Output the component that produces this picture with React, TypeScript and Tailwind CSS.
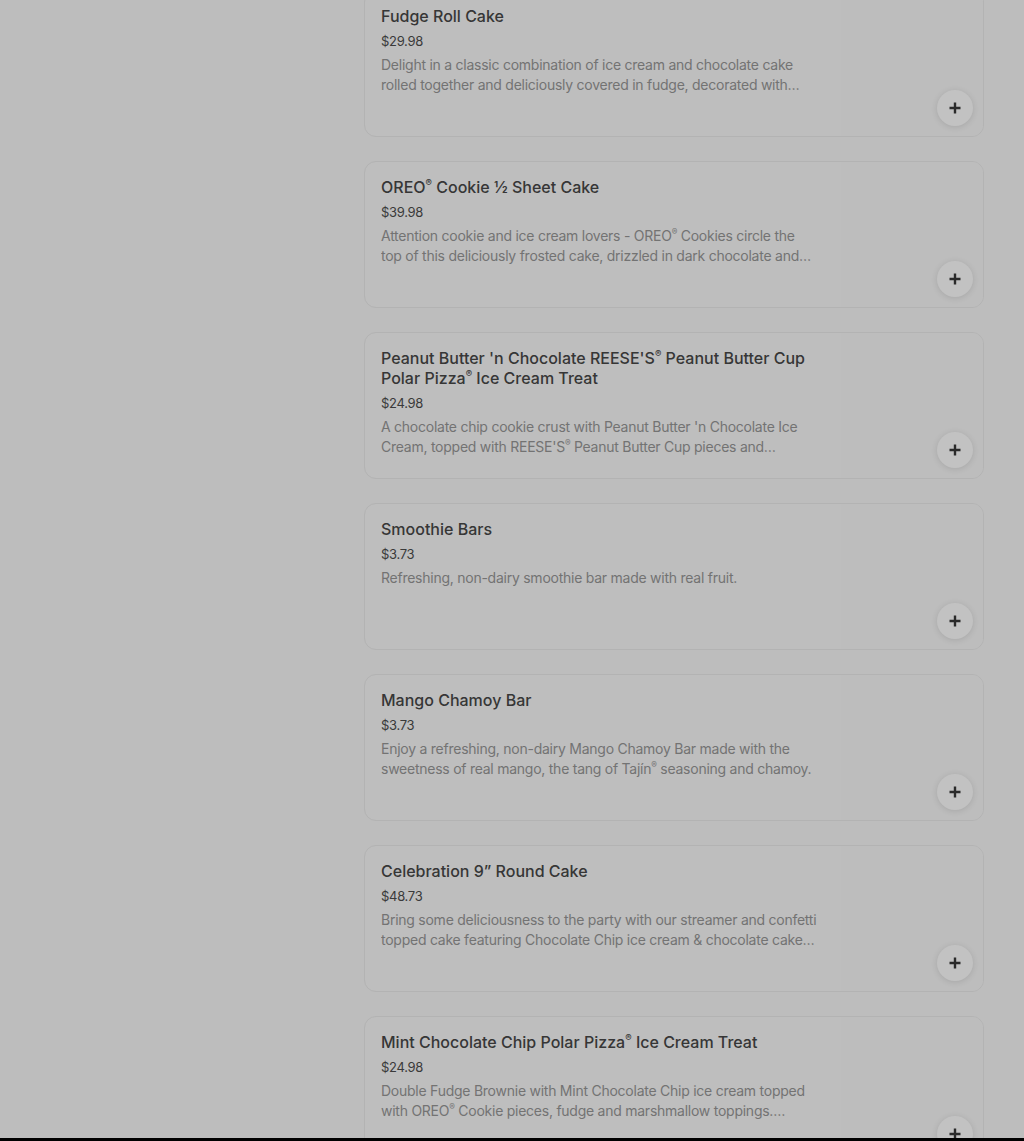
import React from "react";

type Item = { title: string; price: string; desc: string };

const items: Item[] = [
  {
    title: "Fudge Roll Cake",
    price: "$29.98",
    desc: "Delight in a classic combination of ice cream and chocolate cake rolled together and deliciously covered in fudge, decorated with chocolate crunch and whipped topping for any celebration.",
  },
  {
    title: "OREO® Cookie ½ Sheet Cake",
    price: "$39.98",
    desc: "Attention cookie and ice cream lovers - OREO® Cookies circle the top of this deliciously frosted cake, drizzled in dark chocolate and layered with OREO® cookie pieces.",
  },
  {
    title: "Peanut Butter 'n Chocolate REESE'S® Peanut Butter Cup Polar Pizza® Ice Cream Treat",
    price: "$24.98",
    desc: "A chocolate chip cookie crust with Peanut Butter 'n Chocolate Ice Cream, topped with REESE'S® Peanut Butter Cup pieces and drizzled with fudge and peanut butter.",
  },
  {
    title: "Smoothie Bars",
    price: "$3.73",
    desc: "Refreshing, non-dairy smoothie bar made with real fruit.",
  },
  {
    title: "Mango Chamoy Bar",
    price: "$3.73",
    desc: "Enjoy a refreshing, non-dairy Mango Chamoy Bar made with the sweetness of real mango, the tang of Tajín® seasoning and chamoy.",
  },
  {
    title: "Celebration 9” Round Cake",
    price: "$48.73",
    desc: "Bring some deliciousness to the party with our streamer and confetti topped cake featuring Chocolate Chip ice cream & chocolate cake layered with fudge and crunch.",
  },
  {
    title: "Mint Chocolate Chip Polar Pizza® Ice Cream Treat",
    price: "$24.98",
    desc: "Double Fudge Brownie with Mint Chocolate Chip ice cream topped with OREO® Cookie pieces, fudge and marshmallow toppings. Serves 8-10 people.",
  },
];

function Reg({ text }: { text: string }) {
  const parts = text.split("®");
  return (
    <>
      {parts.map((p, i) => (
        <React.Fragment key={i}>
          {p}
          {i < parts.length - 1 && <sup className="top-[-0.7em] text-[0.6em]">®</sup>}
        </React.Fragment>
      ))}
    </>
  );
}

function PlusIcon() {
  return (
    <svg width="14" height="14" viewBox="0 0 14 14" fill="none">
      <path d="M7 1.5v11M1.5 7h11" stroke="#2a2a2a" strokeWidth="2.4" />
    </svg>
  );
}

function Card({ item }: { item: Item }) {
  return (
    <div className="relative flex h-[147px] shrink-0 rounded-[12px] border border-[#b3b3b3] bg-[#bebebe]">
      <div className="flex w-[458px] flex-col pl-4 pt-[15px]">
        <div className="text-[16px] font-medium leading-[20px] text-[#363636]">
          <Reg text={item.title} />
        </div>
        <div className="mt-[5px] text-[13px] leading-[20px] tracking-[-0.3px] text-[#3a3a3a]">{item.price}</div>
        <div className="mt-[4px] line-clamp-2 w-[437px] text-[14px] leading-[20px] tracking-[-0.25px] text-[#737373]">
          <Reg text={item.desc} />
        </div>
      </div>
      <div className="flex-1" />
      <div className="w-[142px] rounded-r-[11px] bg-[#bdbdbd]" />
      <button className="absolute bottom-[10px] right-[10px] flex h-[36px] w-[36px] items-center justify-center rounded-full bg-[#c2c2c2] shadow-[0_1px_6px_rgba(0,0,0,0.12)]">
        <PlusIcon />
      </button>
    </div>
  );
}

export default function App() {
  return (
    <div
      className="flex h-[1141px] w-[1024px] flex-col overflow-hidden bg-black"
      style={{ fontFamily: "Inter, Roboto, 'Liberation Sans', sans-serif" }}
    >
      <div className="flex h-[1138px] overflow-hidden bg-[#bdbdbd]">
        <div className="w-[364px] shrink-0" />
        <div className="-mt-[10px] flex w-[620px] shrink-0 flex-col gap-[24px]">
          {items.map((it) => (
            <Card key={it.title} item={it} />
          ))}
        </div>
      </div>
      <div className="h-[3px] bg-black" />
    </div>
  );
}
